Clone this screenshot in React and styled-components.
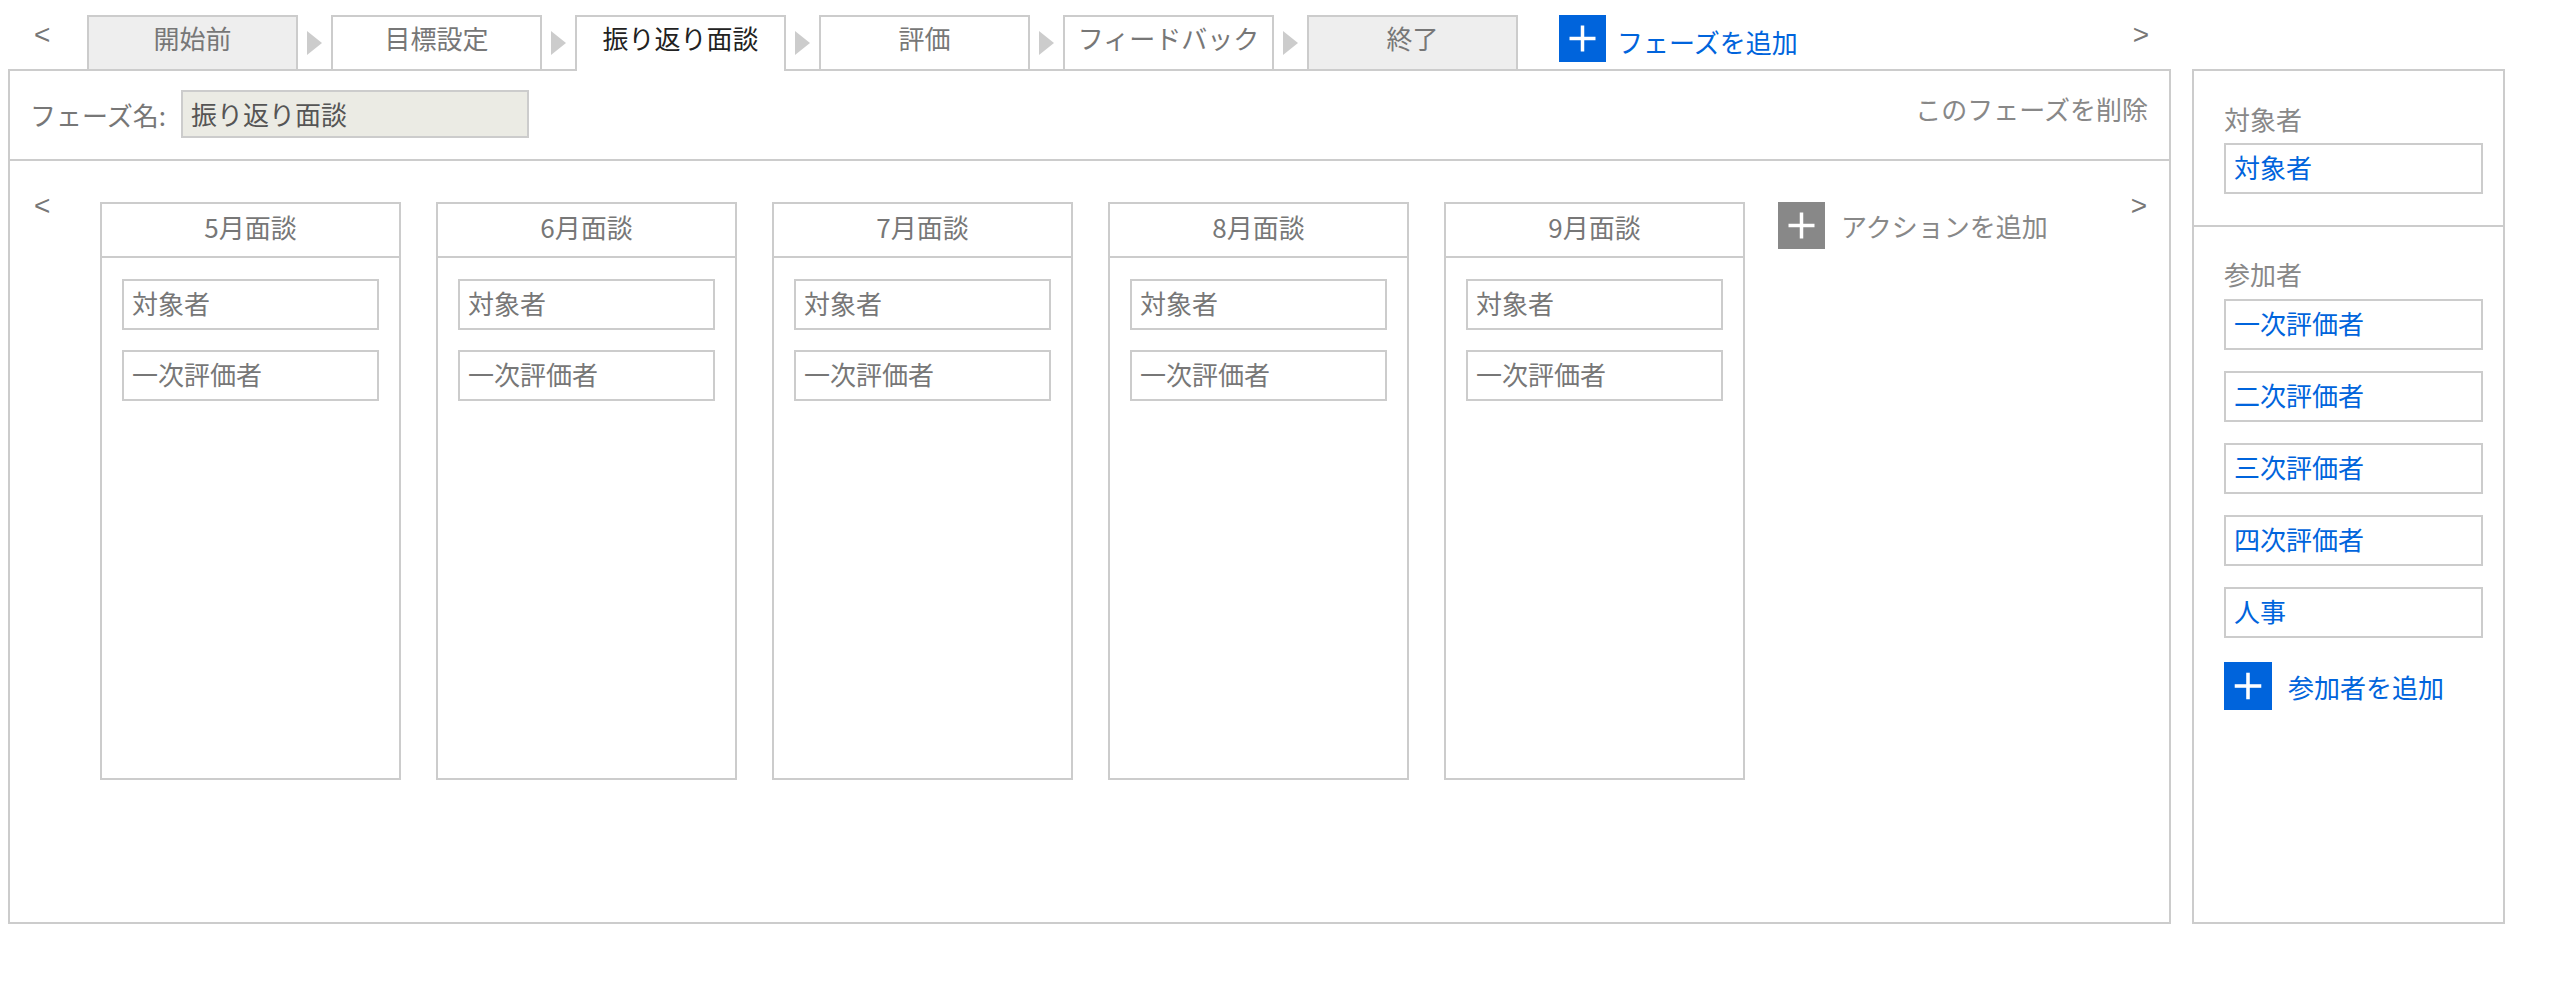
import React from 'react';
import styled, { createGlobalStyle } from 'styled-components';

const BLUE = '#0064dc';
const LINE = '#cccccc';

const GlobalStyle = createGlobalStyle`
  html, body { margin: 0; padding: 0; background: #fff; }
  body {
    font-family: "Noto Sans CJK JP", "Noto Sans", sans-serif;
    font-size: 26px;
    color: #777;
  }
  * { box-sizing: border-box; }
`;

const Page = styled.div`
  display: grid;
  grid-template-columns: 2163px 313px;
  grid-template-rows: 54px 855px;
  column-gap: 21px;
  padding: 15px 0 0 8px;
`;

const TabBar = styled.div`
  grid-column: 1;
  grid-row: 1;
  display: flex;
  align-items: flex-end;
  position: relative;
  z-index: 1;
`;

const NavArrow = styled.span`
  flex: none;
  align-self: flex-start;
  color: #777;
  font-family: "Liberation Sans", "DejaVu Sans", sans-serif;
  font-size: 28px;
  line-height: 40px;
  padding-left: ${p => p.$pl || 0}px;
  padding-right: ${p => p.$pr || 0}px;
  width: ${p => (p.$w ? `${p.$w}px` : 'auto')};
  margin-left: ${p => (p.$end ? 'auto' : '0')};
`;

const Tab = styled.div`
  flex: none;
  width: 211px;
  height: ${p => (p.$active ? 56 : 54)}px;
  margin-bottom: ${p => (p.$active ? -2 : 0)}px;
  border: 2px solid ${LINE};
  border-bottom: 0;
  background: ${p => (p.$active ? '#fff' : p.$muted ? '#eeeeee' : '#fff')};
  color: ${p => (p.$active ? '#222' : '#777')};
  display: flex;
  align-items: center;
  justify-content: center;
  padding-bottom: ${p => (p.$active ? 12 : 10)}px;
  line-height: 1;
`;

const TabGap = styled.div`
  flex: none;
  width: 33px;
  align-self: stretch;
  display: flex;
  align-items: center;
  justify-content: center;
  padding-top: 2px;
`;

const Triangle = styled.span`
  width: 0;
  height: 0;
  border-left: 15px solid ${LINE};
  border-top: 12.5px solid transparent;
  border-bottom: 12.5px solid transparent;
`;

const AddButton = styled.div`
  flex: none;
  display: flex;
  align-items: ${p => (p.$center ? 'center' : 'flex-start')};
  align-self: flex-start;
  gap: ${p => p.$gap || 11}px;
  margin-left: ${p => p.$ml || 0}px;
  margin-top: ${p => p.$mt || 0}px;
  color: ${p => (p.$grey ? '#888' : BLUE)};
`;

const PlusBox = styled.span`
  flex: none;
  width: ${p => p.$size || 47}px;
  height: ${p => p.$size || 47}px;
  background: ${p => (p.$grey ? '#888888' : BLUE)};
  display: flex;
  align-items: center;
  justify-content: center;
`;

const AddLabel = styled.span`
  line-height: 37px;
  padding-top: ${p => p.$pt || 0}px;
`;

const MainPanel = styled.section`
  grid-column: 1;
  grid-row: 2;
  border: 2px solid ${LINE};
  display: flex;
  flex-direction: column;
`;

const PhaseHeader = styled.div`
  flex: none;
  height: 90px;
  border-bottom: 2px solid ${LINE};
  display: flex;
  align-items: center;
  padding: 0 21px 2px 20px;
`;

const FieldLabel = styled.span`
  width: 151px;
  flex: none;
  color: #777;
`;

const NameInput = styled.div`
  width: 348px;
  height: 48px;
  background: #ebebe4;
  border: 2px solid ${LINE};
  color: #555;
  display: flex;
  align-items: center;
  padding: 0 0 2px 8px;
`;

const DeleteLink = styled.span`
  margin-left: auto;
  color: #888;
  padding-bottom: 12px;
`;

const ContentRow = styled.div`
  flex: 1;
  display: flex;
  align-items: flex-start;
  padding-top: 25px;
`;

const CardTrack = styled.div`
  display: flex;
  gap: 35px;
  padding-top: 16px;
`;

const Card = styled.div`
  width: 301px;
  height: 578px;
  border: 2px solid ${LINE};
  display: flex;
  flex-direction: column;
`;

const CardHeader = styled.div`
  height: 54px;
  border-bottom: 2px solid ${LINE};
  display: flex;
  align-items: center;
  justify-content: center;
  color: #777;
  padding-bottom: 8px;
`;

const CardBody = styled.div`
  display: flex;
  flex-direction: column;
  gap: 20px;
  padding: 21px 20px 0;
`;

const Slot = styled.div`
  height: 51px;
  border: 2px solid ${LINE};
  display: flex;
  align-items: center;
  padding: 0 0 4px 8px;
  color: ${p => (p.$blue ? BLUE : '#777')};
`;

const SidePanel = styled.aside`
  grid-column: 2;
  grid-row: 2;
  border: 2px solid ${LINE};
  display: flex;
  flex-direction: column;
`;

const SideSection = styled.div`
  display: flex;
  flex-direction: column;
  padding: ${p => p.$pt}px 20px ${p => p.$pb}px 30px;
  border-bottom: ${p => (p.$divider ? `2px solid ${LINE}` : '0')};
`;

const SideLabel = styled.div`
  line-height: 36px;
  color: #888;
  margin-bottom: ${p => p.$mb}px;
`;

const SlotList = styled.div`
  display: flex;
  flex-direction: column;
  gap: 21px;
`;

const Plus = ({ size = 47 }) => (
  <svg width={size} height={size} viewBox="0 0 47 47">
    <line x1="23.5" y1="10.5" x2="23.5" y2="36.5" stroke="#fff" strokeWidth="3.5" />
    <line x1="10.5" y1="23.5" x2="36.5" y2="23.5" stroke="#fff" strokeWidth="3.5" />
  </svg>
);

const phases = [
  { name: '開始前', muted: true },
  { name: '目標設定' },
  { name: '振り返り面談', active: true },
  { name: '評価' },
  { name: 'フィードバック' },
  { name: '終了', muted: true },
];

const months = ['5月面談', '6月面談', '7月面談', '8月面談', '9月面談'];
const participants = ['一次評価者', '二次評価者', '三次評価者', '四次評価者', '人事'];

export default function App() {
  return (
    <>
      <GlobalStyle />
      <Page>
        <TabBar>
          <NavArrow $w={79} $pl={26}>&lt;</NavArrow>
          {phases.map((p, i) => (
            <React.Fragment key={p.name}>
              {i > 0 && (
                <TabGap>
                  <Triangle />
                </TabGap>
              )}
              <Tab $active={p.active} $muted={p.muted}>{p.name}</Tab>
            </React.Fragment>
          ))}
          <AddButton $ml={41} $gap={11}>
            <PlusBox>
              <Plus />
            </PlusBox>
            <AddLabel $pt={8}>フェーズを追加</AddLabel>
          </AddButton>
          <NavArrow $end $pr={22}>&gt;</NavArrow>
        </TabBar>

        <MainPanel>
          <PhaseHeader>
            <FieldLabel>フェーズ名:</FieldLabel>
            <NameInput>振り返り面談</NameInput>
            <DeleteLink>このフェーズを削除</DeleteLink>
          </PhaseHeader>
          <ContentRow>
            <NavArrow $w={90} $pl={24}>&lt;</NavArrow>
            <CardTrack>
              {months.map(m => (
                <Card key={m}>
                  <CardHeader>{m}</CardHeader>
                  <CardBody>
                    <Slot>対象者</Slot>
                    <Slot>一次評価者</Slot>
                  </CardBody>
                </Card>
              ))}
            </CardTrack>
            <AddButton $grey $center $ml={33} $mt={16} $gap={16}>
              <PlusBox $grey>
                <Plus />
              </PlusBox>
              <AddLabel>アクションを追加</AddLabel>
            </AddButton>
            <NavArrow $end $pr={22}>&gt;</NavArrow>
          </ContentRow>
        </MainPanel>

        <SidePanel>
          <SideSection $divider $pt={30} $pb={31}>
            <SideLabel $mb={6}>対象者</SideLabel>
            <Slot $blue>対象者</Slot>
          </SideSection>
          <SideSection $pt={29} $pb={0}>
            <SideLabel $mb={7}>参加者</SideLabel>
            <SlotList>
              {participants.map(p => (
                <Slot $blue key={p}>{p}</Slot>
              ))}
            </SlotList>
            <AddButton $center $mt={24} $gap={16}>
              <PlusBox $size={48}>
                <Plus size={48} />
              </PlusBox>
              <AddLabel>参加者を追加</AddLabel>
            </AddButton>
          </SideSection>
        </SidePanel>
      </Page>
    </>
  );
}
